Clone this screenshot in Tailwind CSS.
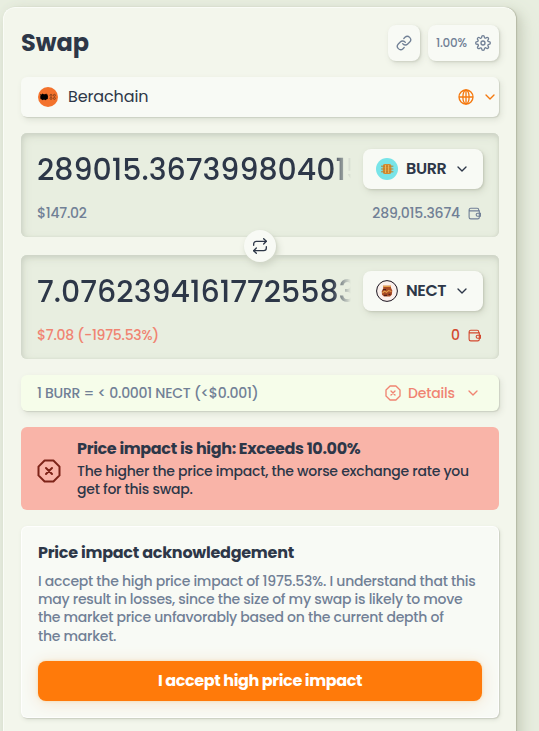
<!DOCTYPE html>
<html lang="en">
<head>
    <meta charset="UTF-8">
    <meta name="viewport" content="width=device-width, initial-scale=1.0">
    <title>Swap</title>
    <script src="https://cdn.jsdelivr.net/npm/@tailwindcss/browser@4"></script>
</head>
<body class="h-[731px] overflow-hidden bg-[#e8eee0] pt-[7px] pl-[3px] font-['Poppins','Inter',sans-serif] text-[#2d3748]">
    <main class="h-[760px] w-[513px] rounded-xl border border-[#fafcf7] border-r-[#f3f6ec] bg-[#f3f6ec] pt-[17px] pr-4 pl-[17px] shadow-[1px_0_1px_#b5baa6,4px_4px_12px_#c8cdbb,8px_8px_20px_#dbe1d1]">
        <header class="flex h-9 items-center justify-between">
            <h1 class="text-2xl font-bold">Swap</h1>
            <div class="flex gap-2 text-[#718096]">
                <button class="flex h-9 w-8 items-center justify-center rounded-lg bg-[#f8faf5] shadow-[1px_1px_2px_#cdd1c4,2px_3px_6px_#dde1d5]">
                    <svg class="size-4" fill="none" stroke="currentColor" stroke-width="2" stroke-linecap="round" stroke-linejoin="round" viewBox="0 0 24 24">
                        <path d="M10 13a5 5 0 0 0 7.54.54l3-3a5 5 0 0 0-7.07-7.07l-1.72 1.71"></path>
                        <path d="M14 11a5 5 0 0 0-7.54-.54l-3 3a5 5 0 0 0 7.07 7.07l1.71-1.71"></path>
                    </svg>
                </button>
                <button class="flex h-9 w-[71px] items-center justify-between rounded-lg bg-[#f8faf5] px-2 shadow-[1px_1px_2px_#cdd1c4,2px_3px_6px_#dde1d5]">
                    <span class="text-xs font-medium tracking-[-0.25px]">1.00%</span>
                    <svg class="size-4" fill="none" stroke="currentColor" stroke-width="2" stroke-linecap="round" stroke-linejoin="round" viewBox="0 0 24 24">
                        <circle cx="12" cy="12" r="3"></circle>
                        <path d="M19.4 15a1.65 1.65 0 0 0 .33 1.82l.06.06a2 2 0 1 1-2.83 2.83l-.06-.06a1.65 1.65 0 0 0-2.82 1.17V21a2 2 0 0 1-4 0v-.09a1.65 1.65 0 0 0-2.9-1.08l-.06.06a2 2 0 1 1-2.83-2.83l.06-.06A1.65 1.65 0 0 0 3.09 14H3a2 2 0 0 1 0-4h.09a1.65 1.65 0 0 0 1.18-2.82l-.06-.06a2 2 0 1 1 2.83-2.83l.06.06A1.65 1.65 0 0 0 10 3.09V3a2 2 0 0 1 4 0v.09a1.65 1.65 0 0 0 2.82 1.18l.06-.06a2 2 0 1 1 2.83 2.83l-.06.06A1.65 1.65 0 0 0 20.91 10H21a2 2 0 0 1 0 4h-.09a1.65 1.65 0 0 0-1.51 1z"></path>
                    </svg>
                </button>
            </div>
        </header>

        <div class="mt-4 flex h-10 items-center rounded-md bg-[#f8faf5] pr-px pl-[17px] shadow-[1px_1px_1px_#cdd1c4,2px_3px_6px_#dde1d5]">
            <svg class="size-5" viewBox="0 0 20 20">
                <circle cx="10" cy="10" r="10" fill="#f3722c"></circle>
                <path d="M2.2 7l1.5.4.8-.8 1.2.6h1.5l1-.7.6.9 1.2.3-.4 1 .5 1-.4 1.2.2 1.2-1.3.2-.7.9-1-.4H5l-.9.4-.6-.9-1.2-.2.3-1.2-.6-.9.6-1z" fill="#000"></path>
                <g fill="none" stroke="#8a431c" stroke-width="1">
                    <circle cx="13" cy="8.3" r="1"></circle>
                    <circle cx="13" cy="11.4" r="1"></circle>
                    <circle cx="16.4" cy="8.3" r="1"></circle>
                    <circle cx="16.4" cy="11.4" r="1"></circle>
                </g>
            </svg>
            <span class="ml-2.5 text-base tracking-[-0.12px]">Berachain</span>
            <svg class="ml-auto size-4 text-[#f5790f]" fill="none" stroke="currentColor" stroke-width="2" viewBox="0 0 24 24">
                <circle cx="12" cy="12" r="10.5"></circle>
                <ellipse cx="12" cy="12" rx="4.7" ry="10.5"></ellipse>
                <path d="M1.5 12h21M12 1.5v21"></path>
            </svg>
            <svg class="ml-2 size-4 text-[#f5790f]" fill="none" stroke="currentColor" stroke-width="2" stroke-linecap="round" stroke-linejoin="round" viewBox="0 0 24 24">
                <path d="m6 9 6 6 6-6"></path>
            </svg>
        </div>

        <div class="relative mt-4 flex flex-col gap-[18px]">
            <section class="h-[104px] rounded-md bg-[#e8eee0] px-4 pt-4 shadow-[inset_1px_2px_4px_#cdd3c6,inset_-1px_0_2px_#d8decf,inset_2px_3px_10px_#d6dccd]">
                <div class="flex h-10 items-center justify-between">
                    <div class="w-[314px] overflow-hidden mask-r-from-[#000] mask-r-from-94% pt-px text-3xl leading-10 font-medium whitespace-nowrap">289015.367399804015</div>
                    <button class="flex h-10 w-[120px] shrink-0 items-center rounded-lg bg-[#f8faf5] px-[13px] shadow-[1px_1px_2px_#c3c8b8,2px_3px_7px_#d2d8c8]">
                        <svg class="size-[22px] shrink-0" viewBox="0 0 22 22">
                            <circle cx="11" cy="11" r="11" fill="#78e4e8"></circle>
                            <rect x="6.8" y="6" width="8.6" height="10" rx="2" fill="#d9892b"></rect>
                            <path d="M5 8.2h12.4M5 11h12.4M5 13.8h12.4" stroke="#b98335" stroke-width="1"></path>
                            <path d="M9.5 7v8M12.6 7v8" stroke="#e7b65e" stroke-width="1"></path>
                        </svg>
                        <span class="ml-2 w-[42px] text-base font-semibold tracking-[-0.4px]">BURR</span>
                        <svg class="ml-2 size-4 shrink-0" fill="none" stroke="currentColor" stroke-width="2" stroke-linecap="round" stroke-linejoin="round" viewBox="0 0 24 24">
                            <path d="m6 9 6 6 6-6"></path>
                        </svg>
                    </button>
                </div>
                <div class="mt-[15px] flex h-[18px] items-center justify-between text-sm font-medium text-[#718096]">
                    <span class="tracking-[-0.25px]">$147.02</span>
                    <span class="flex items-center gap-2">
                        <span class="tracking-[-0.15px]">289,015.3674</span>
                        <svg class="mr-0.5 size-[13px]" fill="none" stroke="currentColor" stroke-width="1.2" viewBox="0 0 14 14">
                            <path d="M11.5 4.2V3a1.6 1.6 0 0 0-1.6-1.6H3A1.8 1.8 0 0 0 1.2 3v8A1.8 1.8 0 0 0 3 12.8h7.4a1.8 1.8 0 0 0 1.8-1.8V4.2H3A1.7 1.7 0 0 1 1.2 2.8"></path>
                            <path d="M13.4 6.8h-3a1.5 1.5 0 0 0 0 3.2h3z"></path>
                        </svg>
                    </span>
                </div>
            </section>

            <section class="h-[104px] rounded-md bg-[#e8eee0] px-4 pt-4 shadow-[inset_1px_2px_4px_#cdd3c6,inset_-1px_0_2px_#d8decf,inset_2px_3px_10px_#d6dccd]">
                <div class="flex h-10 items-center justify-between">
                    <div class="w-[314px] overflow-hidden mask-r-from-[#000] mask-r-from-94% pt-px text-3xl leading-10 font-medium whitespace-nowrap">7.07623941617725583</div>
                    <button class="flex h-10 w-[120px] shrink-0 items-center rounded-lg bg-[#f8faf5] px-[13px] shadow-[1px_1px_2px_#c3c8b8,2px_3px_7px_#d2d8c8]">
                        <svg class="size-[22px] shrink-0" viewBox="0 0 22 22">
                            <circle cx="11" cy="11" r="10.4" fill="#fbf0ec" stroke="#1b1420" stroke-width="1"></circle>
                            <path d="M7 5.8h8v2l1.3 2.7-.5 4.3-1.8 1.7H8l-2-1.7-.3-3.6 1.6-3z" fill="#a84a24"></path>
                            <path d="M7 6.4h8M6.5 13l2-2 2 1.4 2-1.8 3 1" fill="none" stroke="#e5a04d" stroke-width="1.1"></path>
                            <path d="M7 9.6h3M12.5 14.4h2M8 15.4h3" stroke="#512018" stroke-width="1.2"></path>
                        </svg>
                        <span class="ml-2 w-[42px] text-base font-semibold tracking-[-0.4px]">NECT</span>
                        <svg class="ml-2 size-4 shrink-0" fill="none" stroke="currentColor" stroke-width="2" stroke-linecap="round" stroke-linejoin="round" viewBox="0 0 24 24">
                            <path d="m6 9 6 6 6-6"></path>
                        </svg>
                    </button>
                </div>
                <div class="mt-[15px] flex h-[18px] items-center justify-between text-sm font-medium">
                    <span class="tracking-[-0.25px] text-[#f08472]">$7.08 (-1975.53%)</span>
                    <span class="flex items-center gap-2 text-[#d3492f]">
                        <span>0</span>
                        <svg class="mr-0.5 size-[13px]" fill="none" stroke="currentColor" stroke-width="1.2" viewBox="0 0 14 14">
                            <path d="M11.5 4.2V3a1.6 1.6 0 0 0-1.6-1.6H3A1.8 1.8 0 0 0 1.2 3v8A1.8 1.8 0 0 0 3 12.8h7.4a1.8 1.8 0 0 0 1.8-1.8V4.2H3A1.7 1.7 0 0 1 1.2 2.8"></path>
                            <path d="M13.4 6.8h-3a1.5 1.5 0 0 0 0 3.2h3z"></path>
                        </svg>
                    </span>
                </div>
            </section>

            <!-- flips the two tokens -->
            <button class="absolute top-[97px] left-[223px] flex size-8 items-center justify-center rounded-full bg-[#f8faf5] shadow-[1px_1px_2px_#d3d8ca,2px_4px_7px_#cfd5c6]">
                <svg class="size-4" fill="none" stroke="currentColor" stroke-width="2" stroke-linecap="round" stroke-linejoin="round" viewBox="0 0 24 24">
                    <path d="m17.5 1 4 4-4 4"></path>
                    <path d="M2.5 11V9a4 4 0 0 1 4-4h15"></path>
                    <path d="m6.5 23-4-4 4-4"></path>
                    <path d="M21.5 13v2a4 4 0 0 1-4 4h-15"></path>
                </svg>
            </button>
        </div>

        <div class="mt-4 flex h-9 items-center rounded-md bg-[#f6fdea] pr-[18px] pl-4 text-sm shadow-[1px_1px_1px_#cdd1c4,2px_3px_6px_#dde1d5]">
            <span class="font-medium tracking-[-0.25px] text-[#718096]">1 BURR = &lt; 0.0001 NECT (&lt;$0.001)</span>
            <div class="ml-auto flex items-center text-[#f08472]">
                <svg class="size-4" fill="none" stroke="currentColor" stroke-width="2" stroke-linecap="round" stroke-linejoin="round" viewBox="0 0 24 24">
                    <path d="M7.6 1.5h8.8l6.1 6.1v8.8l-6.1 6.1H7.6l-6.1-6.1V7.6zM15 9l-6 6M9 9l6 6"></path>
                </svg>
                <span class="ml-[7px] w-[47px] font-medium tracking-[-0.2px]">Details</span>
                <svg class="ml-2.5 size-4" fill="none" stroke="currentColor" stroke-width="2" stroke-linecap="round" stroke-linejoin="round" viewBox="0 0 24 24">
                    <path d="m6 9 6 6 6-6"></path>
                </svg>
            </div>
        </div>

        <div class="mt-4 flex h-[83px] items-center rounded-md bg-[#f9b4a8] pl-4">
            <svg class="mt-[5px] size-6 shrink-0 text-[#7d2318]" fill="none" stroke="currentColor" stroke-width="2" stroke-linecap="round" stroke-linejoin="round" viewBox="0 0 24 24">
                <path d="M7.6 1.5h8.8l6.1 6.1v8.8l-6.1 6.1H7.6l-6.1-6.1V7.6zM15 9l-6 6M9 9l6 6"></path>
            </svg>
            <div class="mb-[2px] ml-4 whitespace-nowrap">
                <h2 class="text-base leading-6 font-bold tracking-[-0.35px]">Price impact is high: Exceeds 10.00%</h2>
                <p class="mt-px text-sm leading-[18.2px] font-medium tracking-[-0.25px]">The higher the price impact, the worse exchange rate you<br>get for this swap.</p>
            </div>
        </div>

        <section class="mt-4 h-[192px] rounded-md border border-white/80 bg-[#f8faf5] px-4 pt-[14px] shadow-[1px_1px_1px_#cdd1c4,1px_2px_4px_#dde1d5]">
            <h2 class="text-base leading-6 font-bold tracking-[-0.25px] whitespace-nowrap">Price impact acknowledgement</h2>
            <p class="mt-[7px] text-sm leading-[18.2px] font-medium tracking-[-0.25px] whitespace-nowrap text-[#718096]">I accept the high price impact of 1975.53%. I understand that this<br>may result in losses, since the size of my swap is likely to move<br>the market price unfavorably based on the current depth of<br>the market.</p>
            <button class="mt-4 flex h-10 w-full items-center justify-center rounded-lg bg-[#ff7a0a] text-base font-bold tracking-[-0.4px] text-white shadow-[0_0_3px_#f6d7a8,0_2px_16px_#f3e3cc]">I accept high price impact</button>
        </section>
    </main>
</body>
</html>
